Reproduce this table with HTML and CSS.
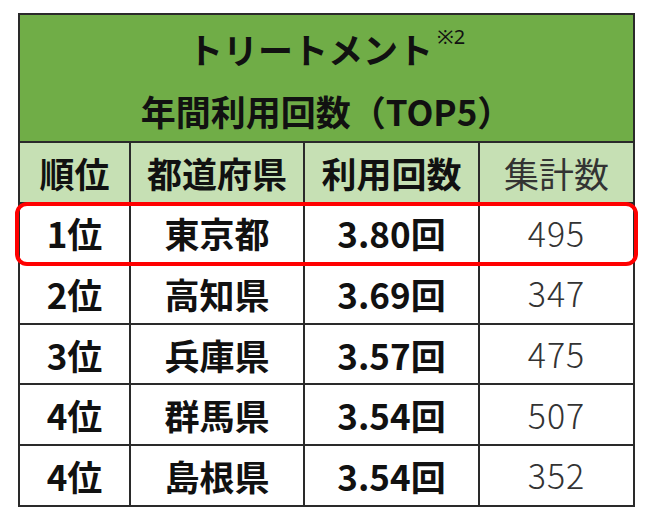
FILE: index.html
```html
<!DOCTYPE html>
<html lang="ja">
<head>
<meta charset="utf-8">
<link rel="stylesheet" href="styles.css">
</head>
<body>
<div class="wrap">
  <table class="rank">
    <colgroup>
      <col class="c1"><col class="c2"><col class="c3"><col class="c4">
    </colgroup>
    <thead>
      <tr>
        <th colspan="4" class="title">
          <div class="line1">トリートメント<sup class="note">※2</sup></div>
          <div class="line2">年間利用回数（TOP5）</div>
        </th>
      </tr>
      <tr class="head">
        <th>順位</th><th>都道府県</th><th>利用回数</th><th class="light">集計数</th>
      </tr>
    </thead>
    <tbody>
      <tr><td>1位</td><td>東京都</td><td>3.80回</td><td class="num">495</td></tr>
      <tr><td>2位</td><td>高知県</td><td>3.69回</td><td class="num">347</td></tr>
      <tr><td>3位</td><td>兵庫県</td><td>3.57回</td><td class="num">475</td></tr>
      <tr><td>4位</td><td>群馬県</td><td>3.54回</td><td class="num">507</td></tr>
      <tr><td>4位</td><td>島根県</td><td>3.54回</td><td class="num">352</td></tr>
    </tbody>
  </table>
  <div class="highlight"></div>
</div>
</body>
</html>
```
FILE: styles.css
```css
html, body {
  margin: 0;
  padding: 0;
  background: #ffffff;
}
.wrap {
  position: relative;
  padding: 13px 0 0 18px;
}
.rank {
  border-collapse: collapse;
  table-layout: fixed;
  width: 615px;
  font-family: "Noto Sans CJK JP", "Noto Sans", sans-serif;
  color: #111;
}
.c1 { width: 111px; }
.c2 { width: 174px; }
.c3 { width: 175px; }
.c4 { width: 155px; }
.rank th, .rank td {
  border: 2px solid #2a2a2a;
  text-align: center;
  padding: 0;
  font-weight: 700;
  font-size: 35px;
  line-height: 1;
  height: 58.6px;
}
.rank .title {
  background: #70ad47;
  height: 126px;
  font-size: 35px;
  vertical-align: top;
}
.line1 {
  line-height: 40px;
  margin-top: 14px;
  margin-bottom: 22px;
}
.line2 {
  line-height: 40px;
}
.note {
  font-size: 20px;
  font-weight: 400;
  vertical-align: top;
  line-height: 1;
  position: relative;
  top: -2px;
  margin-left: 4px;
  font-family: "Noto Sans", sans-serif;
}
.head th {
  background: #c6e0b4;
}
.rank .light {
  font-weight: 400;
  color: #333;
}
.rank .num {
  font-weight: 300;
  font-size: 34px;
  letter-spacing: 1px;
  color: #333;
}
.highlight {
  position: absolute;
  left: 15px;
  top: 202px;
  width: 615px;
  height: 56px;
  border: 4px solid #ff0000;
  border-radius: 12px;
}
```
